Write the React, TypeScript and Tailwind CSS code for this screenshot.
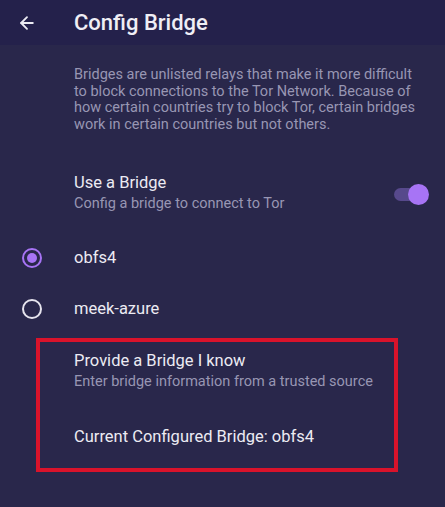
import { ArrowLeft } from "lucide-react";

const font = { fontFamily: "Roboto, 'Noto Sans', sans-serif" };

function Radio({ checked, label }: { checked?: boolean; label: string }) {
  return (
    <div className="flex items-center h-[51px]">
      <div className="w-[74px] pl-[22px]">
        {checked ? (
          <div className="w-[20px] h-[20px] rounded-full border-2 border-[#a774f5] flex items-center justify-center">
            <div className="w-[10px] h-[10px] rounded-full bg-[#a774f5]" />
          </div>
        ) : (
          <div className="w-[20px] h-[20px] rounded-full border-2 border-[#e6e4ee]" />
        )}
      </div>
      <span className="text-[16.5px] text-[#ecebf3]">{label}</span>
    </div>
  );
}

export default function App() {
  return (
    <div className="w-[445px] h-[507px] bg-[#29274b] text-white overflow-hidden" style={font}>
      <div className="h-[45px] bg-[#24214b] flex items-center">
        <div className="w-[74px] pl-[17px]">
          <ArrowLeft size={20} strokeWidth={2.2} color="#ecebf3" />
        </div>
        <h1 className="text-[22px] font-medium text-[#efeef5]">Config Bridge</h1>
      </div>

      <p className="pl-[74px] pr-[20px] pt-[22px] text-[14.5px] leading-[16.6px] text-[#9896b3]">
        Bridges are unlisted relays that make it more difficult to block connections to the Tor Network. Because of
        how certain countries try to block Tor, certain bridges work in certain countries but not others.
      </p>

      <div className="flex items-center pl-[74px] pr-[16px] pt-[40px]">
        <div className="flex-1">
          <div className="text-[16.5px] text-[#ecebf3] leading-[20px]">Use a Bridge</div>
          <div className="text-[14.5px] text-[#9896b3] leading-[22px]">Config a bridge to connect to Tor</div>
        </div>
        <div className="relative w-[35px] h-[21px] flex items-center">
          <div className="w-[30px] h-[13px] rounded-full bg-[#57498c]" />
          <div className="absolute right-0 top-0 w-[21px] h-[21px] rounded-full bg-[#a774f5]" />
        </div>
      </div>

      <div className="pt-[17px]">
        <Radio checked label="obfs4" />
        <Radio label="meek-azure" />
      </div>

      <div className="ml-[36px] mt-[4px] w-[362px] h-[134px] border-4 border-[#d9132b] pl-[34px] pt-[8px]">
        <div className="text-[16.5px] text-[#ecebf3] leading-[22px]">Provide a Bridge I know</div>
        <div className="text-[14.5px] text-[#9896b3] leading-[20px]">Enter bridge information from a trusted source</div>
        <div className="text-[16.5px] text-[#ecebf3] leading-[22px] mt-[34px]">Current Configured Bridge: obfs4</div>
      </div>
    </div>
  );
}
